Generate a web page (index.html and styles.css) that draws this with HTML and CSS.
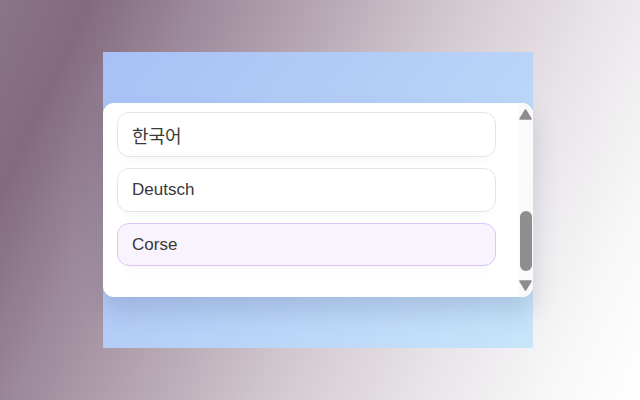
FILE: index.html
```html
<!DOCTYPE html>
<html lang="ko">
<head>
<meta charset="utf-8">
<title>Language list</title>
<link rel="stylesheet" href="styles.css">
</head>
<body>
<div class="stage">
  <div class="panel">
    <ul class="list">
      <li class="item"><span class="ko">한국어</span></li>
      <li class="item">Deutsch</li>
      <li class="item selected">Corse</li>
    </ul>
    <div class="scrollbar">
      <svg class="arrow" width="13" height="11" viewBox="0 0 13 11"><polygon points="6.5,1 12,10 1,10" fill="#8d8d8d" stroke="#8d8d8d" stroke-width="1.6" stroke-linejoin="round"/></svg>
      <div class="track"><div class="thumb"></div></div>
      <svg class="arrow" width="13" height="11" viewBox="0 0 13 11"><polygon points="1,1 12,1 6.5,10" fill="#8d8d8d" stroke="#8d8d8d" stroke-width="1.6" stroke-linejoin="round"/></svg>
    </div>
  </div>
</div>
</body>
</html>
```
FILE: styles.css
```css
html, body {
  margin: 0;
  padding: 0;
  width: 640px;
  height: 400px;
  overflow: hidden;
}
body {
  background: linear-gradient(115deg, #8b7487 0%, #846a7f 11%, #9c899a 24%, #b4a5b1 38%, #d3cad1 56%, #e9e5e9 74%, #f7f7f7 88%, #ffffff 100%);
  font-family: "Liberation Sans", "Noto Sans CJK KR", sans-serif;
}
.stage {
  margin: 52px 0 0 103px;
  width: 430px;
  height: 296px;
  background: linear-gradient(135deg, #a8c0f5 0%, #b6d0f7 50%, #c8e5fa 100%);
  display: flex;
  align-items: center;
}
.panel {
  width: 430px;
  height: 194px;
  background: #ffffff;
  border-radius: 11px;
  box-shadow: 0 14px 24px rgba(70, 90, 130, 0.2);
  display: flex;
  overflow: hidden;
}
.list {
  list-style: none;
  margin: 0;
  padding: 9px 22px 0 14px;
  flex: 1;
  display: flex;
  flex-direction: column;
  gap: 11px;
}
.item {
  height: 42px;
  box-sizing: content-box;
  border: 1px solid #e4e4e4;
  border-radius: 12px;
  background: #ffffff;
  padding: 0 14px;
  display: flex;
  align-items: center;
  font-size: 17px;
  color: #383838;
  box-shadow: 0 8px 14px -8px rgba(0, 0, 0, 0.06);
}
.item:first-child {
  height: 43px;
}
.item.selected {
  background: #f9f3fe;
  border-color: #dac5f6;
  height: 41px;
}
.ko {
  font-family: "Noto Sans CJK KR", "Liberation Sans", sans-serif;
  font-size: 18px;
  font-weight: 400;
  color: #3a3a3a;
}
.scrollbar {
  width: 15px;
  background: #fafafa;
  display: flex;
  flex-direction: column;
  align-items: center;
  padding: 6px 0;
  box-sizing: border-box;
}
.arrow {
  display: block;
  flex: none;
}
.track {
  flex: 1;
  width: 15px;
  display: flex;
  flex-direction: column;
  justify-content: flex-end;
  padding-bottom: 9px;
  box-sizing: border-box;
}
.thumb {
  width: 12px;
  height: 60px;
  margin-left: 2px;
  border-radius: 6px;
  background: #8e8e8e;
}
```
